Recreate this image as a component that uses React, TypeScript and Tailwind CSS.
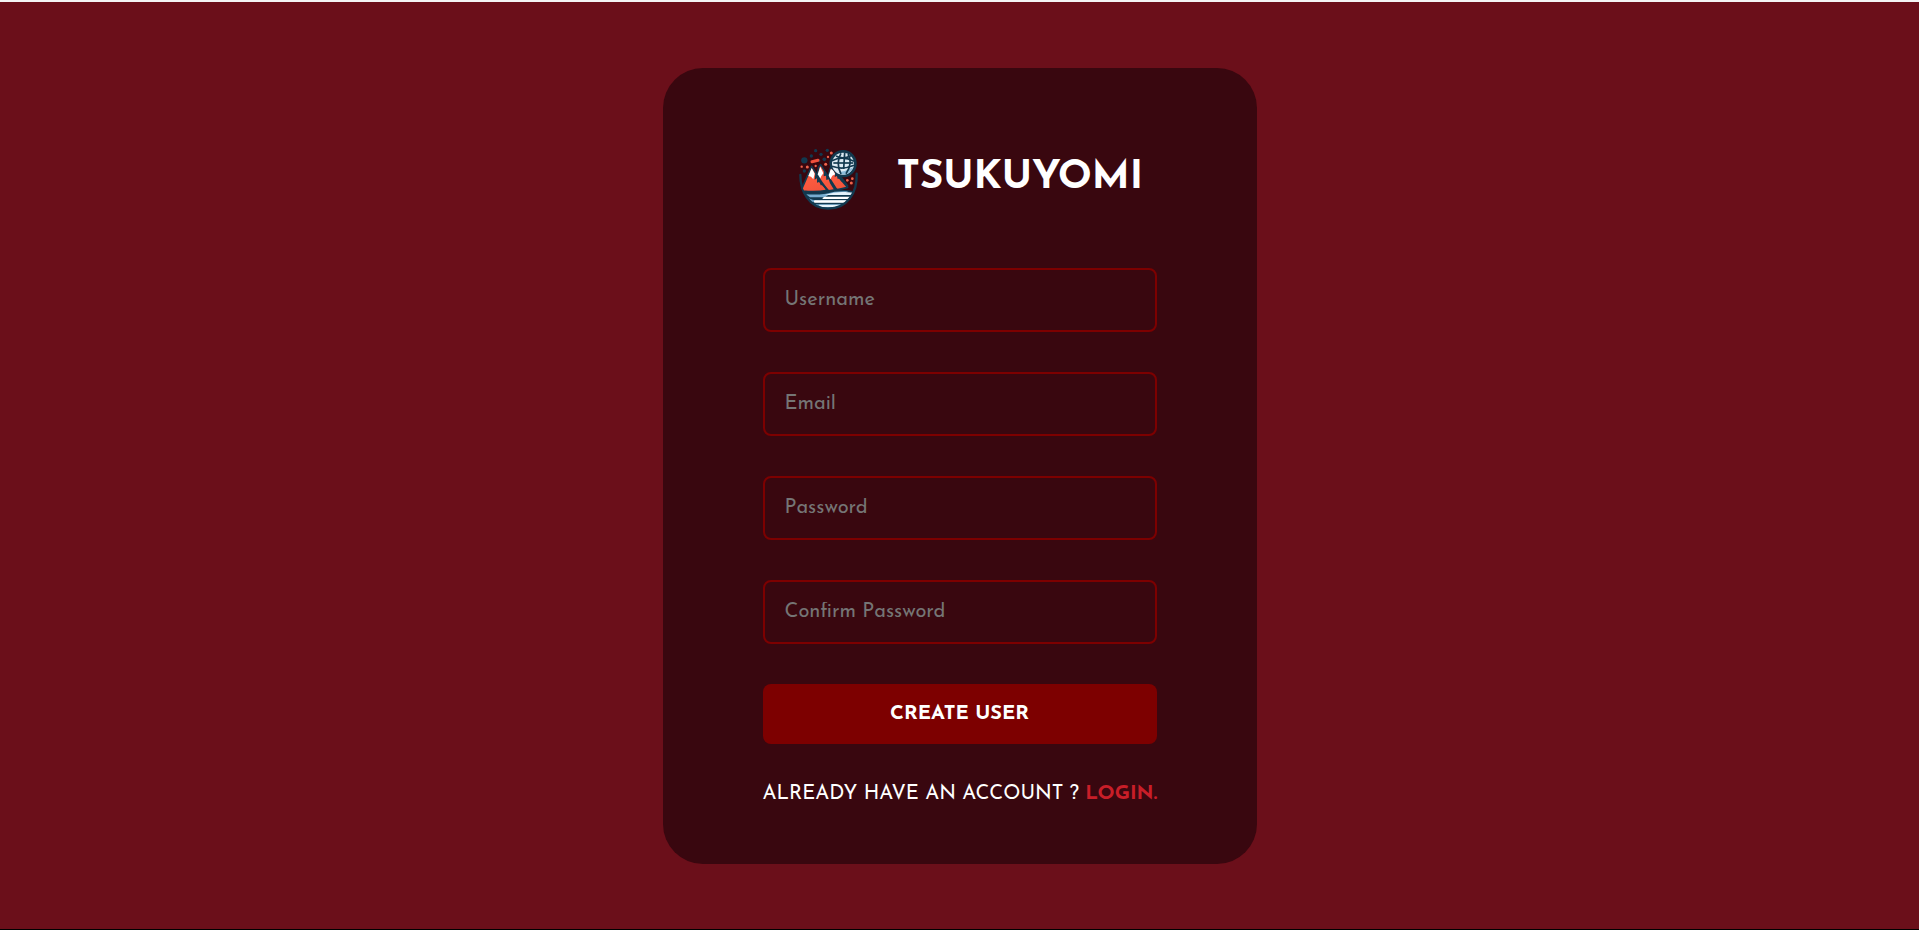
import React from "react";

function Logo() {
  return (
    <svg viewBox="0 0 228 228" className="h-[76px] w-[76px] shrink-0" aria-hidden="true">
      <defs>
        <clipPath id="bowl">
          <path d="M31 105 C31 150 55 206 114 206 C172 206 202 158 200 101Z" />
        </clipPath>
        <linearGradient id="lava" x1="0" y1="0" x2="0.3" y2="1">
          <stop offset="0" stopColor="#f0503c" />
          <stop offset="0.6" stopColor="#fb5a3f" />
          <stop offset="1" stopColor="#f4553c" />
        </linearGradient>
      </defs>
      <g clipPath="url(#bowl)">
        <path d="M30 154 Q75 160 112 153 Q160 144 202 156 V212 H30Z" fill="#12394f" />
        <path d="M48 163 Q80 165 108 161 Q138 152 176 154 L150 163 H118 L105 172 H60Z" fill="#77add0" />
        <path d="M104 165 Q135 154 166 156 L192 158 V165Z" fill="#e3f1fa" />
        <path d="M105 170 H192 V177 H98 Q96 172 105 170Z" fill="#ffffff" />
        <path d="M48 170 Q72 184 94 181 H190 V187 H60Z" fill="#6da4c8" />
        <rect x="72" y="181" width="108" height="7" rx="3" fill="#ffffff" />
        <path d="M66 193 H166 L142 203 H88Z" fill="#5b99c0" />
        <path d="M86 194 H150 L140 201 H92Z" fill="#e8f4fb" />
      </g>
      <path d="M31 105 C31 150 55 206 114 206 C172 206 202 158 200 101" fill="none" stroke="#12394f" strokeWidth="7" strokeLinecap="round" />
      <g stroke="#12394f" strokeWidth="5" strokeLinejoin="round">
        <path d="M114 120 L119 90 Q123 76 130 82 L147 112 L173 142 Q145 151 112 150Z" fill="url(#lava)" />
        <path d="M78 120 L86 82 L92 74 L103 92 L119 116 L140 149 Q112 155 92 152Z" fill="url(#lava)" />
        <path d="M36 145 L50 113 L65 79 L78 100 L90 126 L114 151 Q74 158 40 153Z" fill="url(#lava)" />
      </g>
      <path d="M65 84 L74 101 L70 118 L63 110 L55 108Z" fill="#ffffff" />
      <path d="M91 80 L100 100 L94 108 L89 119 L82 106Z" fill="#ffffff" />
      <path d="M122 88 L128 88 L136 103 L127 107 L121 118 L116 106Z" fill="#ffffff" />
      <path d="M76 101 L74 119 L81 115 L81 128 L89 125 L92 136 L98 135 L108 151 L116 151 L96 124 L84 104Z" fill="#12394f" />
      <path d="M102 94 L101 109 L108 107 L109 120 L116 118 L120 130 L132 149 L140 148 L119 115Z" fill="#12394f" />
      <path d="M136 98 L134 111 L141 108 L143 117 L150 115 L153 124 L161 126 L172 140 L176 138 L156 111 L142 104Z" fill="#12394f" />
      <path fill="#12394f" d="M159 30 A41 41 0 1 1 144 109 Q137 104 131 93 Q118 84 118 70 A41 41 0 0 1 159 30Z" />
      <circle cx="159" cy="71" r="33" fill="#dceaf3" />
      <path d="M145 97 Q168 94 190 82 Q179 104 163 104 Q154 104 145 97Z" fill="#8bbbd9" />
      <g fill="none" stroke="#12394f" strokeWidth="5">
        <path d="M126 62 Q158 46 192 64" />
        <path d="M126 79 Q158 91 192 76" />
        <path d="M130 69 H190" />
        <path d="M153 40 Q136 68 153 102" />
        <path d="M164 38 L161 87" />
        <path d="M174 42 Q190 69 168 101" />
        <path d="M138 48 Q158 59 183 47" />
      </g>
      <g fill="#12394f">
        <circle cx="43" cy="61" r="9.5" />
        <circle cx="64" cy="48" r="5" />
        <circle cx="77" cy="32" r="5" />
        <circle cx="93" cy="43" r="5" />
        <circle cx="112" cy="31" r="5" />
        <circle cx="103" cy="58" r="5.5" />
        <circle cx="43" cy="93" r="5" />
        <circle cx="87" cy="62" r="4" />
      </g>
      <path d="M66 65 L84 61" stroke="#f0503c" strokeWidth="9" strokeLinecap="round" />
      <g fill="#f0644c">
        <circle cx="35" cy="80" r="3.5" />
        <circle cx="52" cy="81" r="4.5" />
        <circle cx="77" cy="78" r="3.5" />
        <circle cx="107" cy="73" r="4.5" />
        <circle cx="114" cy="51" r="3.5" />
        <circle cx="124" cy="39" r="4.5" />
        <circle cx="187" cy="116" r="4" />
        <circle cx="172" cy="121" r="4" />
        <circle cx="184" cy="129" r="4.5" />
      </g>
    </svg>
  );
}

const fields = [
  { label: "Username", type: "text" },
  { label: "Email", type: "email" },
  { label: "Password", type: "password" },
  { label: "Confirm Password", type: "password" },
];

export default function App() {
  return (
    <div className="flex h-[930px] w-full flex-col items-center border-t-2 border-b border-t-[#f4f4f4] border-b-black bg-[#6b0f1a] pt-[66px] font-['Josefin_Sans','Lato',sans-serif] text-white">
      <main className="flex h-[796px] w-[594px] flex-col rounded-[40px] bg-[#39070f] px-[100px] pt-[72px]">
        <header className="mb-[52px] flex h-[76px] pl-[27px]">
          <Logo />
          <h1 className="ml-[31px] pt-[14px] text-[40px] leading-[48px] font-bold whitespace-nowrap">TSUKUYOMI</h1>
        </header>
        <form className="flex flex-col gap-10" onSubmit={(e) => e.preventDefault()}>
          {fields.map((f) => (
            <input
              key={f.label}
              type={f.type}
              placeholder={f.label}
              className="h-16 w-full rounded-lg border-2 border-[#7d0000] bg-transparent px-5 text-[20px] outline-none placeholder:text-[#757575]"
            />
          ))}
          <button type="submit" className="h-[60px] w-full rounded-lg bg-[#7d0000] text-[20px] font-bold">
            CREATE USER
          </button>
        </form>
        <p className="mt-[38px] text-[20px] leading-[24px] whitespace-nowrap">
          <span>ALREADY HAVE AN ACCOUNT ? </span>
          <a href="#login" className="font-bold text-[#c81e28]">LOGIN.</a>
        </p>
      </main>
    </div>
  );
}
